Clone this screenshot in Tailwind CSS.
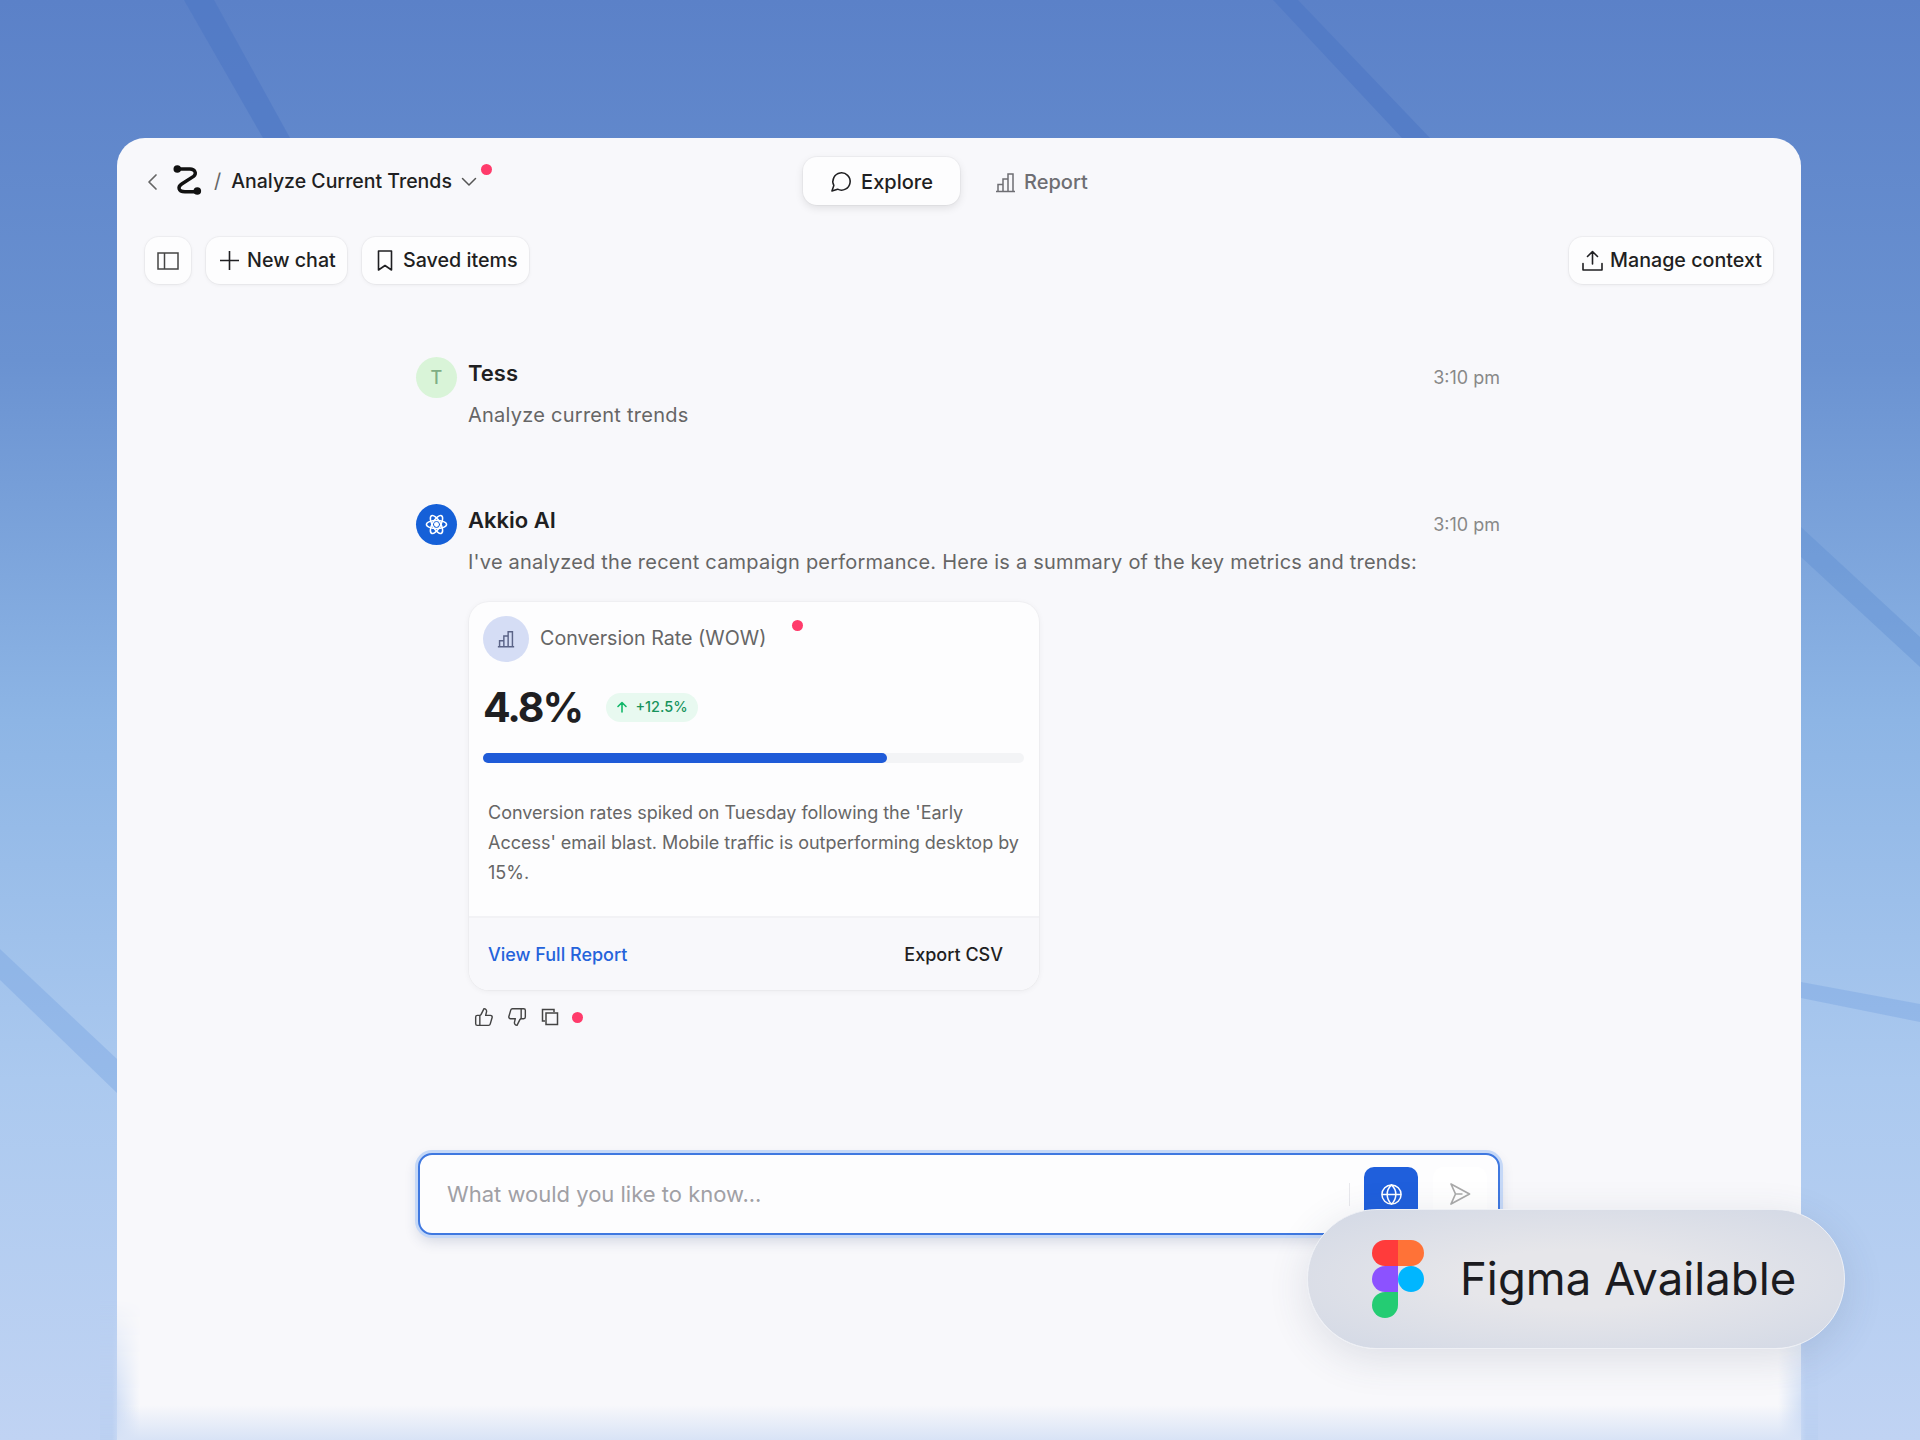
<!DOCTYPE html>
<html lang="en">
<head>
  <meta charset="UTF-8" />
  <title>Akkio Explore</title>
  <script src="https://cdn.jsdelivr.net/npm/@tailwindcss/browser@4"></script>
</head>
<body class="font-['Inter',sans-serif] text-[#1f1f22]">
  <div class="relative w-[1920px] h-[1440px] overflow-hidden bg-[linear-gradient(180deg,#5b81c8_0%,#6a92d1_25%,#8db5e5_50%,#abc9ef_75%,#c0d3f3_100%)]">
    <!-- background stripes -->
    <svg class="absolute inset-0" width="1920" height="1440" viewBox="0 0 1920 1440">
      <polygon points="184,0 214,0 290,138 263,138" fill="#4f78c5" fill-opacity="0.65" />
      <polygon points="1273,0 1298,0 1430,138 1402,138" fill="#4f78c5" fill-opacity="0.65" />
      <polygon points="1801,527 1920,637 1920,667 1801,557" fill="#5f8ed3" fill-opacity="0.4" />
      <polygon points="1801,982 1920,1004 1920,1022 1801,998" fill="#6f9fdf" fill-opacity="0.35" />
      <polygon points="0,949 117,1059 117,1093 0,980" fill="#6f9fdf" fill-opacity="0.35" />
    </svg>

    <div class="relative ml-[117px] mt-[138px] w-[1684px] h-[1302px] rounded-t-[28px] bg-[#f8f8fb] overflow-hidden">
      <!-- header -->
      <div class="flex items-center pt-[20px] h-[68px]">
        <div class="w-[686px] flex items-center pl-[29px]">
          <svg class="w-[12px] h-[18px] text-[#666]" viewBox="0 0 12 18" fill="none" stroke="currentColor" stroke-width="1.7" stroke-linecap="round" stroke-linejoin="round"><path d="M10 2 3 9l7 7" /></svg>
          <svg class="ml-[12px] w-[36px] h-[36px] mt-[-3px]" viewBox="0 0 36 36" fill="none"><path d="M7.3 6H20c5 0 7 4.500 3.500 7.500L11.700 21c-4 2.500-4 7.700 3.300 7.700h12.300" stroke="#111" stroke-width="3.400" stroke-linecap="round" /><circle cx="7.300" cy="6" r="3.800" fill="#111" /><circle cx="27.300" cy="28" r="3.800" fill="#111" /></svg>
          <span class="ml-[8px] text-[20px] text-[#666] mt-[-2px]">/</span>
          <span class="ml-[10px] text-[19.500px] font-[450] leading-[30px] whitespace-nowrap mt-[-2px]">Analyze Current Trends</span>
          <div class="relative ml-[9px]">
            <svg class="w-[16px] h-[10px] text-[#555]" viewBox="0 0 16 10" fill="none" stroke="currentColor" stroke-width="1.500" stroke-linecap="round" stroke-linejoin="round"><path d="m1.500 1.500 6.500 6.500 6.500-6.500" /></svg>
            <span class="absolute left-[20px] top-[-13px] w-[11px] h-[11px] rounded-full bg-[#ff3b6b]"></span>
          </div>
        </div>
        <div class="flex items-center">
          <div class="w-[157px] h-[48px] mt-[-2px] flex items-center justify-center gap-[8px] rounded-[14px] bg-[#fdfdfe] shadow-[0_0_0_1px_rgba(0,0,0,0.03),0_3px_8px_rgba(0,0,0,0.1)] text-[20px] font-[450]">
            <svg class="w-[23px] h-[23px]" viewBox="0 0 24 24" fill="none" stroke="currentColor" stroke-width="1.600" stroke-linejoin="round"><path d="M7.900 20A9 9 0 1 0 4 16.100L2 22Z" /></svg>
            <span class="pt-[1px]">Explore</span>
          </div>
          <div class="ml-[35px] flex items-center gap-[8px] text-[20px] font-[450] text-[#6e6e73]">
            <svg class="w-[21px] h-[21px]" viewBox="0 0 21 21" fill="none" stroke="currentColor" stroke-width="1.500"><path d="M1 19.500h19M3 19.500v-7h5v7M8 19.500V7h5v12.500M13 19.500V2h5v17.500" /></svg>
            Report
          </div>
        </div>
      </div>

      <!-- toolbar -->
      <div class="flex items-center justify-between mt-[31px] px-[28px] h-[47px]">
        <div class="flex items-center gap-[15px]">
          <button class="w-[46px] h-[47px] flex items-center justify-center rounded-[14px] bg-[#fdfdfe] shadow-[0_0_0_1px_rgba(0,0,0,0.03),0_1px_4px_rgba(0,0,0,0.06)]">
            <svg class="w-[22px] h-[18px] text-[#444]" viewBox="0 0 22 18" fill="none" stroke="currentColor" stroke-width="1.500"><rect x="1" y="1" width="20" height="16" /><path d="M7.500 1v16" /></svg>
          </button>
          <button class="w-[141px] h-[47px] flex items-center gap-[7px] pl-[13px] rounded-[14px] bg-[#fdfdfe] shadow-[0_0_0_1px_rgba(0,0,0,0.03),0_1px_4px_rgba(0,0,0,0.06)] text-[19.700px] font-[450]">
            <svg class="w-[21px] h-[21px]" viewBox="0 0 21 21" fill="none" stroke="currentColor" stroke-width="1.600"><path d="M10.500 1v19M1 10.500h19" /></svg>
            New chat
          </button>
          <button class="w-[167px] h-[47px] flex items-center gap-[10px] pl-[15px] rounded-[14px] bg-[#fdfdfe] shadow-[0_0_0_1px_rgba(0,0,0,0.03),0_1px_4px_rgba(0,0,0,0.06)] text-[19.700px] font-[450]">
            <svg class="w-[16px] h-[21px]" viewBox="0 0 16 21" fill="none" stroke="currentColor" stroke-width="1.600" stroke-linejoin="round"><path d="M1.500 1h13v19L8 15.500 1.500 20Z" /></svg>
            Saved items
          </button>
        </div>
        <button class="w-[204px] h-[47px] flex items-center gap-[7px] pl-[13px] rounded-[14px] bg-[#fdfdfe] shadow-[0_0_0_1px_rgba(0,0,0,0.03),0_1px_4px_rgba(0,0,0,0.06)] text-[19.700px] font-[450]">
          <svg class="w-[21px] h-[21px]" viewBox="0 0 21 21" fill="none" stroke="currentColor" stroke-width="1.600" stroke-linecap="round" stroke-linejoin="round"><path d="M1 13.500V20h19v-6.500M10.500 14V2M5.500 6.500l5-5 5 5" /></svg>
          Manage context
        </button>
      </div>

      <!-- conversation -->
      <div class="ml-[299px] w-[1084px] mt-[73px]">
        <div class="flex gap-[11px]">
          <div class="w-[41px] h-[41px] shrink-0 rounded-full bg-[#d9f4d8] flex items-center justify-center text-[18px] font-medium text-[#7fae84]">T</div>
          <div class="flex-1">
            <div class="flex justify-between h-[32px]">
              <span class="text-[22px] font-semibold leading-[32px]">Tess</span>
              <span class="text-[18px] leading-[32px] pt-[5px] text-[#888]">3:10 pm</span>
            </div>
            <p class="mt-[11px] text-[20px] tracking-[0.25px] leading-[30px] text-[#666]">Analyze current trends</p>
          </div>
        </div>

        <div class="flex gap-[11px] mt-[74px]">
          <div class="w-[41px] h-[41px] shrink-0 rounded-full bg-[#1560d8] flex items-center justify-center">
            <svg class="w-[23px] h-[23px]" viewBox="0 0 24 24" fill="none" stroke="#fff" stroke-width="1.600"><circle cx="12" cy="12" r="1.800" fill="#fff" /><ellipse cx="12" cy="12" rx="10.500" ry="4.200" /><ellipse cx="12" cy="12" rx="10.500" ry="4.200" transform="rotate(60 12 12)" /><ellipse cx="12" cy="12" rx="10.500" ry="4.200" transform="rotate(120 12 12)" /></svg>
          </div>
          <div class="flex-1">
            <div class="flex justify-between h-[32px]">
              <span class="text-[22px] font-semibold leading-[32px]">Akkio AI</span>
              <span class="text-[18px] leading-[32px] pt-[5px] text-[#888]">3:10 pm</span>
            </div>
            <p class="mt-[11px] text-[20px] tracking-[0.22px] leading-[30px] text-[#666]">I've analyzed the recent campaign performance. Here is a summary of the key metrics and trends:</p>

            <!-- metric card -->
            <div class="relative mt-[25px] ml-[1px] w-[570px] h-[388px] rounded-[20px] bg-[#fdfdfe] shadow-[0_0_0_1px_rgba(0,0,0,0.02),0_1px_6px_rgba(0,0,0,0.06)] overflow-hidden flex flex-col">
              <span class="absolute left-[323px] top-[18px] w-[11px] h-[11px] rounded-full bg-[#ff3b6b]"></span>
              <div class="flex items-center gap-[11px] pt-[14px] pl-[14px]">
                <div class="w-[46px] h-[46px] rounded-full bg-[#d5ddf5] flex items-center justify-center">
                  <svg class="w-[18px] h-[18px] text-[#5b6488]" viewBox="0 0 21 21" fill="none" stroke="currentColor" stroke-width="1.700"><path d="M1 19.500h19M3 19.500v-7h5v7M8 19.500V7h5v12.500M13 19.500V2h5v17.500" /></svg>
                </div>
                <span class="text-[19.700px] text-[#666]">Conversion Rate (WOW)</span>
              </div>
              <div class="flex items-center gap-[24px] mt-[29px] pl-[14px] h-[32px]">
                <span class="text-[41px] tracking-[-0.05em] font-bold leading-none">4.8%</span>
                <span class="h-[29px] w-[92px] flex items-center justify-center gap-[7px] rounded-full bg-[#e8f9f0] text-[14.500px] font-medium text-[#17935c]">
                  <svg class="w-[12px] h-[12px] text-[#12b76a]" viewBox="0 0 12 12" fill="none" stroke="currentColor" stroke-width="1.600" stroke-linecap="round" stroke-linejoin="round"><path d="M6 11V1.500M2 5.500l4-4 4 4" /></svg>
                  +12.5%
                </span>
              </div>
              <div class="mt-[30px] ml-[14px] mr-[15px] h-[10px] rounded-full bg-[#f3f4f6]">
                <div class="h-full rounded-full bg-[#1f5bd8]" style="width: 74.7%"></div>
              </div>
              <p class="mt-[35px] pl-[19px] pr-[8px] text-[18px] tracking-[-0.01px] leading-[30px] text-[#666]">Conversion rates spiked on Tuesday following the 'Early Access' email blast. Mobile traffic is outperforming desktop by 15%.</p>
              <div class="mt-auto h-[74px] border-t-2 border-[#f2f2f5] bg-[#f8f8fb] flex items-center justify-between pl-[19px] pr-[36px] text-[18px] font-[450]">
                <span class="text-[#2563db]">View Full Report</span>
                <span>Export CSV</span>
              </div>
            </div>

            <!-- message actions -->
            <div class="flex items-center gap-[13px] mt-[17px] pl-[6px] h-[20px] text-[#444]">
              <svg class="w-[20px] h-[20px]" viewBox="0 0 24 24" fill="none" stroke="currentColor" stroke-width="1.700" stroke-linejoin="round"><path d="M7 10v12" /><path d="M15 5.880 14 10h5.830a2 2 0 0 1 1.920 2.560l-2.330 8A2 2 0 0 1 17.500 22H4a2 2 0 0 1-2-2v-8a2 2 0 0 1 2-2h2.760a2 2 0 0 0 1.790-1.110L12 2a3.130 3.130 0 0 1 3 3.880Z" /></svg>
              <svg class="w-[20px] h-[20px]" viewBox="0 0 24 24" fill="none" stroke="currentColor" stroke-width="1.700" stroke-linejoin="round"><path d="M17 14V2" /><path d="M9 18.120 10 14H4.170a2 2 0 0 1-1.920-2.560l2.330-8A2 2 0 0 1 6.500 2H20a2 2 0 0 1 2 2v8a2 2 0 0 1-2 2h-2.760a2 2 0 0 0-1.790 1.110L12 22a3.130 3.130 0 0 1-3-3.880Z" /></svg>
              <svg class="w-[18px] h-[18px] ml-[1px]" viewBox="0 0 18 18" fill="none" stroke="currentColor" stroke-width="1.500"><path d="M4 13H1.500V1.500H13V4" /><rect x="5" y="5" width="11.500" height="11.500" /></svg>
              <span class="w-[11px] h-[11px] rounded-full bg-[#ff3b6b]"></span>
            </div>
          </div>
        </div>
      </div>

      <!-- chat input -->
      <div class="ml-[301px] mt-[126px] w-[1082px] h-[82px] rounded-[14px] border-2 border-[#3f78e0] bg-[#fdfdfe] shadow-[0_0_0_3px_#c5d8f7,0_6px_14px_rgba(40,60,110,0.18)] flex items-center pl-[27px]">
        <span class="flex-1 text-[22px] text-[#a0a0a5]">What would you like to know...</span>
        <span class="w-[1px] h-[23px] bg-[#e8e8ec]"></span>
        <div class="ml-[14px] w-[54px] h-[54px] rounded-[10px] bg-[#1f5fdc] flex items-center justify-center">
          <svg class="w-[23px] h-[23px]" viewBox="0 0 24 24" fill="none" stroke="#fff" stroke-width="1.600"><circle cx="12" cy="12" r="10" /><path d="M2 12h20M12 2c3 2.700 4.500 6 4.500 10s-1.500 7.300-4.500 10c-3-2.700-4.500-6-4.500-10S9 4.700 12 2Z" /></svg>
        </div>
        <div class="ml-[15px] mr-[11px] w-[54px] h-[54px] rounded-[10px] bg-white flex items-center justify-center">
          <svg class="w-[22px] h-[24px]" viewBox="0 0 22 24" fill="none" stroke="#aaa" stroke-width="1.700" stroke-linejoin="round"><path d="M2 2 20.500 12 2 22l4.500-10ZM6.500 12h7" /></svg>
        </div>
      </div>
    </div>

    <!-- soft panel edges and fade near the bottom -->
    <div class="absolute left-[100px] top-[1300px] w-[40px] h-[140px] bg-[linear-gradient(90deg,#bbd0f1,#bbd0f1_30%,#f8f8fb)] [mask-image:linear-gradient(180deg,transparent,black)]"></div>
    <div class="absolute left-[1778px] top-[1300px] w-[40px] h-[140px] bg-[linear-gradient(270deg,#bbd0f1,#bbd0f1_30%,#f8f8fb)] [mask-image:linear-gradient(180deg,transparent,black)]"></div>
    <div class="absolute left-[117px] w-[1684px] top-[1405px] h-[35px] bg-[linear-gradient(180deg,rgba(216,227,246,0),#d8e3f6)]"></div>

    <!-- figma pill -->
    <div class="absolute left-[1307px] top-[1209px] w-[538px] h-[140px] rounded-full border border-[#eef0f5] bg-[radial-gradient(ellipse_at_center,#e6e6ea_30%,#d2d8e5_100%)] shadow-[0_10px_40px_rgba(60,70,100,0.14)] flex items-center pl-[64px]">
      <svg class="w-[52px] h-[78px] shrink-0" viewBox="0 0 52 78">
        <path d="M26 0H13a13 13 0 0 0 0 26h13Z" fill="#ff3b3b" />
        <path d="M26 0h13a13 13 0 0 1 0 26H26Z" fill="#ff7237" />
        <path d="M26 26H13a13 13 0 0 0 0 26h13Z" fill="#8c52ff" />
        <circle cx="39" cy="39" r="13" fill="#00b6ff" />
        <path d="M26 52H13a13 13 0 1 0 13 13Z" fill="#24cc73" />
      </svg>
      <span class="ml-[36px] text-[45.500px] leading-none whitespace-nowrap text-[#1b1b1f]">Figma Available</span>
    </div>
  </div>
</body>
</html>
